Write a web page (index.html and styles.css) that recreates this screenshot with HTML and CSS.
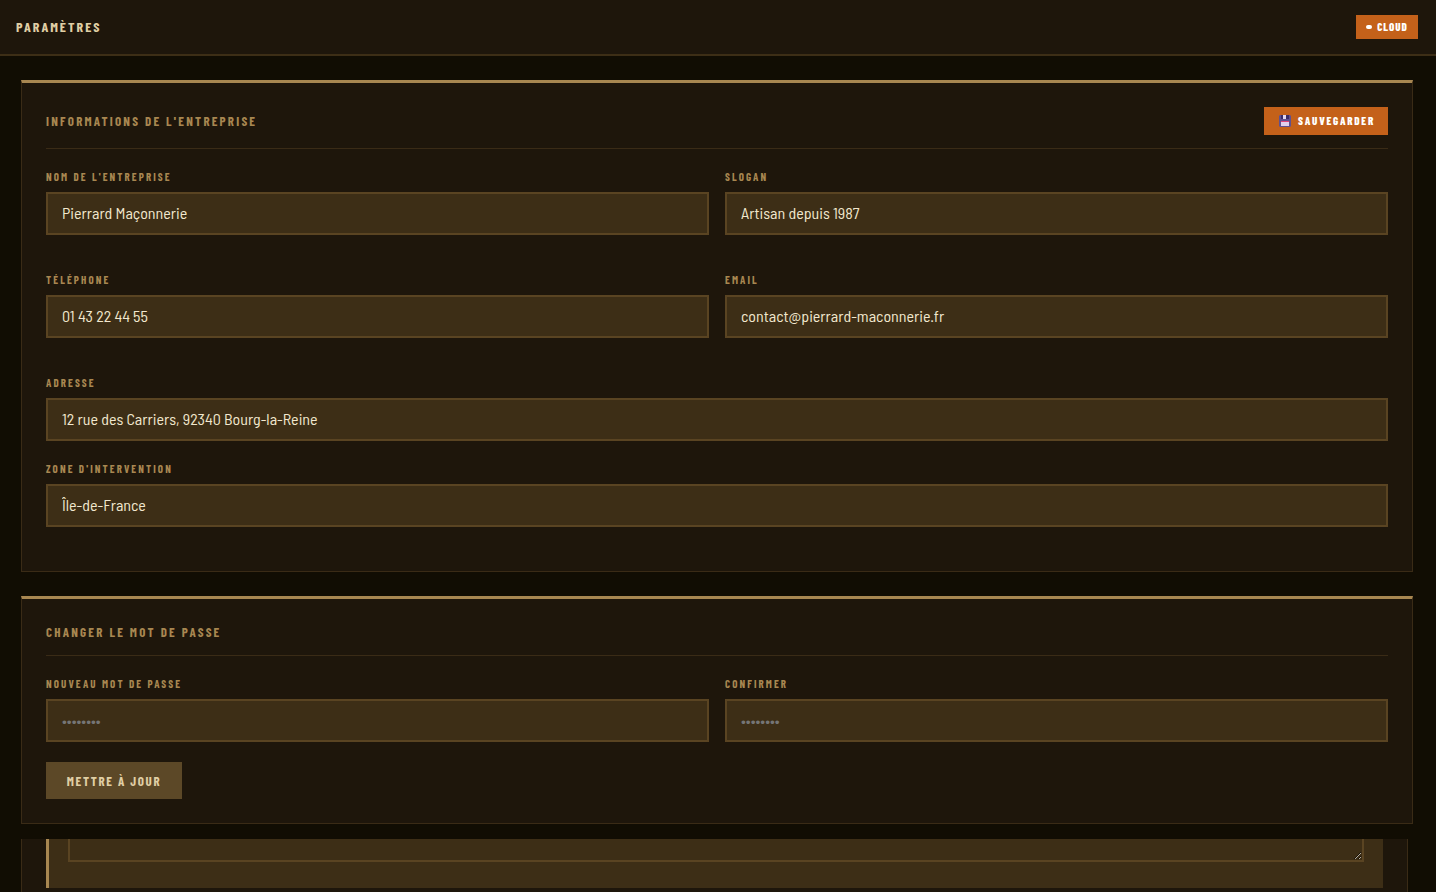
FILE: index.html
```
<!DOCTYPE html>
<html lang="fr">
<head>
  <meta charset="UTF-8">
  <meta name="viewport" content="width=device-width, initial-scale=1.0">
  <title>Paramètres</title>
  <link rel="stylesheet" href="styles.css">
</head>
<body>
  <header class="topbar">
    <h1>Paramètres</h1>
    <button type="button" class="btn btn-cloud">
      <svg width="6" height="4" viewBox="0 0 6 4" aria-hidden="true"><rect width="6" height="4" rx="2" fill="#fff"/></svg>
      Cloud
    </button>
  </header>

  <main>
    <form class="card" id="companyForm">
      <div class="card-header">
        <h2>Informations de l'entreprise</h2>
        <button type="submit" class="btn btn-save">
          <svg width="12" height="12" viewBox="0 0 12 12" aria-hidden="true">
            <path d="M1 0h10l1 1v10l-1 1H1l-1-1V1z" fill="#5f5090"/>
            <path d="M2 0h8v4H2z" fill="#3a2c66"/>
            <path d="M4 0h3v4H4z" fill="#e0d8f0"/>
            <path d="M2 6h8v1H2z" fill="#e0457b"/>
            <path d="M2 7h8v4H2z" fill="#e0d0ee"/>
          </svg>
          Sauvegarder
        </button>
      </div>
      <div class="form-row">
        <div class="form-group">
          <label for="name">Nom de l'entreprise</label>
          <input type="text" id="name" value="Pierrard Maçonnerie">
        </div>
        <div class="form-group">
          <label for="slogan">Slogan</label>
          <input type="text" id="slogan" value="Artisan depuis 1987">
        </div>
      </div>
      <div class="form-row">
        <div class="form-group">
          <label for="phone">Téléphone</label>
          <input type="tel" id="phone" value="01 43 22 44 55">
        </div>
        <div class="form-group">
          <label for="email">Email</label>
          <input type="email" id="email" value="contact@pierrard-maconnerie.fr">
        </div>
      </div>
      <div class="form-group">
        <label for="address">Adresse</label>
        <input type="text" id="address" value="12 rue des Carriers, 92340 Bourg-la-Reine">
      </div>
      <div class="form-group">
        <label for="zone">Zone d'intervention</label>
        <input type="text" id="zone" value="Île-de-France">
      </div>
    </form>

    <form class="card" id="passwordForm">
      <div class="card-header">
        <h2>Changer le mot de passe</h2>
      </div>
      <div class="form-pair">
        <div class="form-group">
          <label for="pass">Nouveau mot de passe</label>
          <input type="password" id="pass" placeholder="••••••••">
        </div>
        <div class="form-group">
          <label for="confirm">Confirmer</label>
          <input type="password" id="confirm" placeholder="••••••••">
        </div>
      </div>
      <button type="submit" class="btn btn-update">Mettre à jour</button>
    </form>

    <section class="card-tail">
      <div class="block">
        <textarea aria-label="Texte"></textarea>
      </div>
    </section>
  </main>
</body>
</html>
```
FILE: styles.css
```
* { box-sizing: border-box; }
html, body { height: 100%; }
body {
  margin: 0;
  display: flex;
  flex-direction: column;
  background: #110d03;
  color: #e0cfa5;
  font-family: 'Barlow Condensed', 'Liberation Sans Narrow', 'Roboto', sans-serif;
  overflow: hidden;
}
.topbar {
  display: flex;
  justify-content: space-between;
  align-items: center;
  padding: 15px 18px 15px 16px;
  background: #1e160b;
  border-bottom: 2px solid #3d2e16;
}
h1, h2 { margin: 0; text-transform: uppercase; font-weight: 700; }
h1 { font-size: 14px; line-height: 16px; letter-spacing: 2px; }
h2 {
  font-size: 13px;
  line-height: 19px;
  letter-spacing: 0.17em;
  color: #a88751;
}

main {
  flex: 1;
  display: flex;
  flex-direction: column;
  padding: 24px 23px 0 21px;
}
.card {
  margin-bottom: 24px;
  padding: 24px;
  background: #1e160b;
  border: 1px solid #3a2b16;
  border-top: 3px solid #a88751;
}
#passwordForm { margin-bottom: 15px; }
.card-header {
  display: flex;
  justify-content: space-between;
  align-items: center;
  padding-bottom: 13px;
  margin-bottom: 20px;
  border-bottom: 1px solid #3a2b16;
}

.form-row, .form-pair {
  display: grid;
  grid-template-columns: 1fr 1fr;
  gap: 16px;
}
.form-row { margin-bottom: 17px; }
.form-group { margin-bottom: 20px; }
label {
  display: block;
  margin-bottom: 8px;
  font-size: 11px;
  line-height: 15px;
  font-weight: 700;
  letter-spacing: 0.19em;
  text-transform: uppercase;
  color: #a88751;
}
input {
  display: block;
  width: 100%;
  height: 43px;
  padding: 0 14px 2px;
  background: #3d2e16;
  border: 2px solid #5a4422;
  color: #f2e8ce;
  font-family: 'Barlow Semi Condensed', 'Barlow', 'Roboto', sans-serif;
  font-size: 16px;
}
input::placeholder { color: #757575; }

.btn {
  display: inline-flex;
  align-items: center;
  border: none;
  border-radius: 0;
  font-family: inherit;
  font-weight: 700;
  text-transform: uppercase;
  cursor: pointer;
}
.btn-cloud, .btn-save {
  justify-content: center;
  background: #c4611a;
  color: #fff;
  font-size: 11px;
  line-height: 14px;
  font-weight: 800;
}
.btn-cloud { min-width: 62px; height: 24px; padding: 0 10px; gap: 5px; letter-spacing: 1px; }
.btn-save { min-width: 124px; height: 28px; padding: 0 12px 0 14px; gap: 7px; letter-spacing: 0.16em; }
.btn-update {
  justify-content: center;
  min-width: 136px;
  height: 37px;
  padding: 0 20px;
  background: #5c4827;
  color: #e0cfa5;
  font-size: 13px;
  letter-spacing: 0.13em;
}

/* bottom of the next card, cut by the scroll area */
.card-tail {
  flex: 1;
  margin-right: 5px;
  padding: 0 24px;
  background: #1e160b;
  border: 1px solid #3a2b16;
  border-width: 0 1px;
}
.block {
  padding: 0 19px 26px;
  background: #3d2e16;
  border-left: 3px solid #a88751;
}
textarea {
  display: block;
  width: 100%;
  height: 23px;
  background: #3d2e16;
  border: 2px solid #5a4422;
  border-top: none;
  color: #f2e8ce;
  resize: vertical;
}
```
